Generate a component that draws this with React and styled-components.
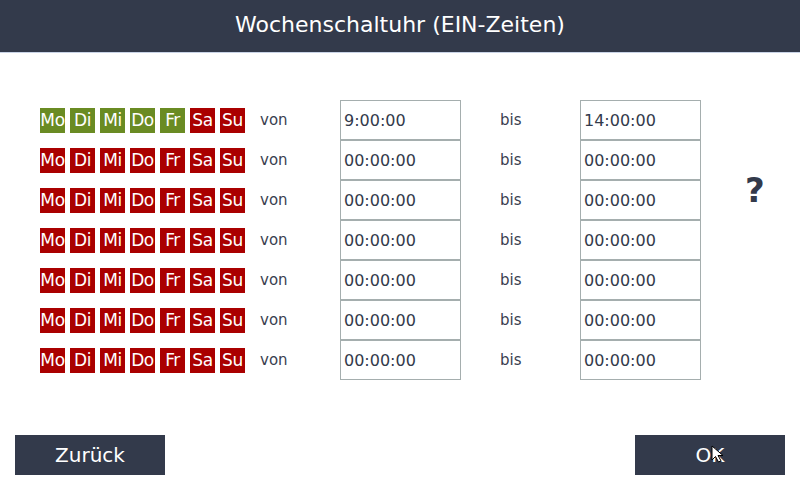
import React from 'react'
import styled, { createGlobalStyle } from 'styled-components'

const GlobalStyle = createGlobalStyle`
  html, body {
    margin: 0;
    padding: 0;
    background: #fff;
    font-family: "DejaVu Sans", "Liberation Sans", sans-serif;
  }
`

const DAYS = ['Mo', 'Di', 'Mi', 'Do', 'Fr', 'Sa', 'Su']

const rows = [
  { active: [true, true, true, true, true, false, false], from: '9:00:00', to: '14:00:00' },
  ...Array.from({ length: 6 }, () => ({
    active: [false, false, false, false, false, false, false],
    from: '00:00:00',
    to: '00:00:00',
  })),
]

export default function App() {
  return (
    <Screen>
      <GlobalStyle />
      <Header>Wochenschaltuhr (EIN-Zeiten)</Header>

      <Main>
        <Table>
          {rows.map((row, i) => (
            <React.Fragment key={i}>
              <Days>
                {DAYS.map((d, j) => (
                  <Day key={d} $on={row.active[j]}>{d}</Day>
                ))}
              </Days>
              <Label>von</Label>
              <TimeCell>
                <TimeBox>{row.from}</TimeBox>
              </TimeCell>
              <Label>bis</Label>
              <TimeCell>
                <TimeBox>{row.to}</TimeBox>
              </TimeCell>
            </React.Fragment>
          ))}
        </Table>
        <Help>?</Help>
      </Main>

      <Footer>
        <Button>Zurück</Button>
        <Button>
          OK
          <Cursor width="16" height="18" viewBox="0 0 16 18">
            <path d="M1 1 L1 15 L4.5 11.5 L7.5 17 L10 15.8 L7 10.5 L12 10.5 Z" fill="#fff" stroke="#000" strokeWidth="1" />
          </Cursor>
        </Button>
      </Footer>
    </Screen>
  )
}

const Screen = styled.div`
    width: 800px;
    height: 480px;
    display: flex;
    flex-direction: column;
    overflow: hidden;
`

const Header = styled.div`
    height: 53px;
    flex-shrink: 0;
    background-color: #333a4b;
    border-bottom: 1px solid #c9d3e6;
    color: #fff;
    font-size: 22px;
    display: flex;
    align-items: center;
    justify-content: center;
    padding-bottom: 3px;
    box-sizing: border-box;
`

const Main = styled.div`
    flex: 1;
    display: flex;
    align-items: flex-start;
    padding: 47px 0 0 40px;
`

const Table = styled.div`
    display: grid;
    grid-template-columns: 220px 80px 160px 80px 121px;
    grid-auto-rows: 40px;
    align-items: center;
`

const Days = styled.div`
    display: flex;
    gap: 5px;
`

const Day = styled.div`
    width: 25px;
    height: 25px;
    display: flex;
    align-items: center;
    justify-content: center;
    color: #fff;
    font-size: 17px;
    letter-spacing: -0.4px;
    background-color: ${p => (p.$on ? '#6a8b23' : '#aa0000')};
`

const Label = styled.div`
    color: #3a4050;
    font-size: 15px;
`

const TimeCell = styled.div`
    height: 40px;
`

const TimeBox = styled.div`
    width: 121px;
    height: 40px;
    box-sizing: border-box;
    border: 1px solid #a5aeae;
    padding-left: 3px;
    display: flex;
    align-items: center;
    color: #333a4b;
    font-size: 16px;
`

const Help = styled.div`
    margin: 70px 0 0 44px;
    font-size: 34px;
    font-weight: bold;
    color: #333a4b;
`

const Footer = styled.div`
    display: flex;
    justify-content: space-between;
    padding: 0 15px 5px;
`

const Button = styled.div`
    position: relative;
    width: 150px;
    height: 40px;
    background-color: #333a4b;
    color: #fff;
    font-size: 20px;
    display: flex;
    align-items: center;
    justify-content: center;
`

const Cursor = styled.svg`
    position: absolute;
    left: 76px;
    top: 10px;
`
